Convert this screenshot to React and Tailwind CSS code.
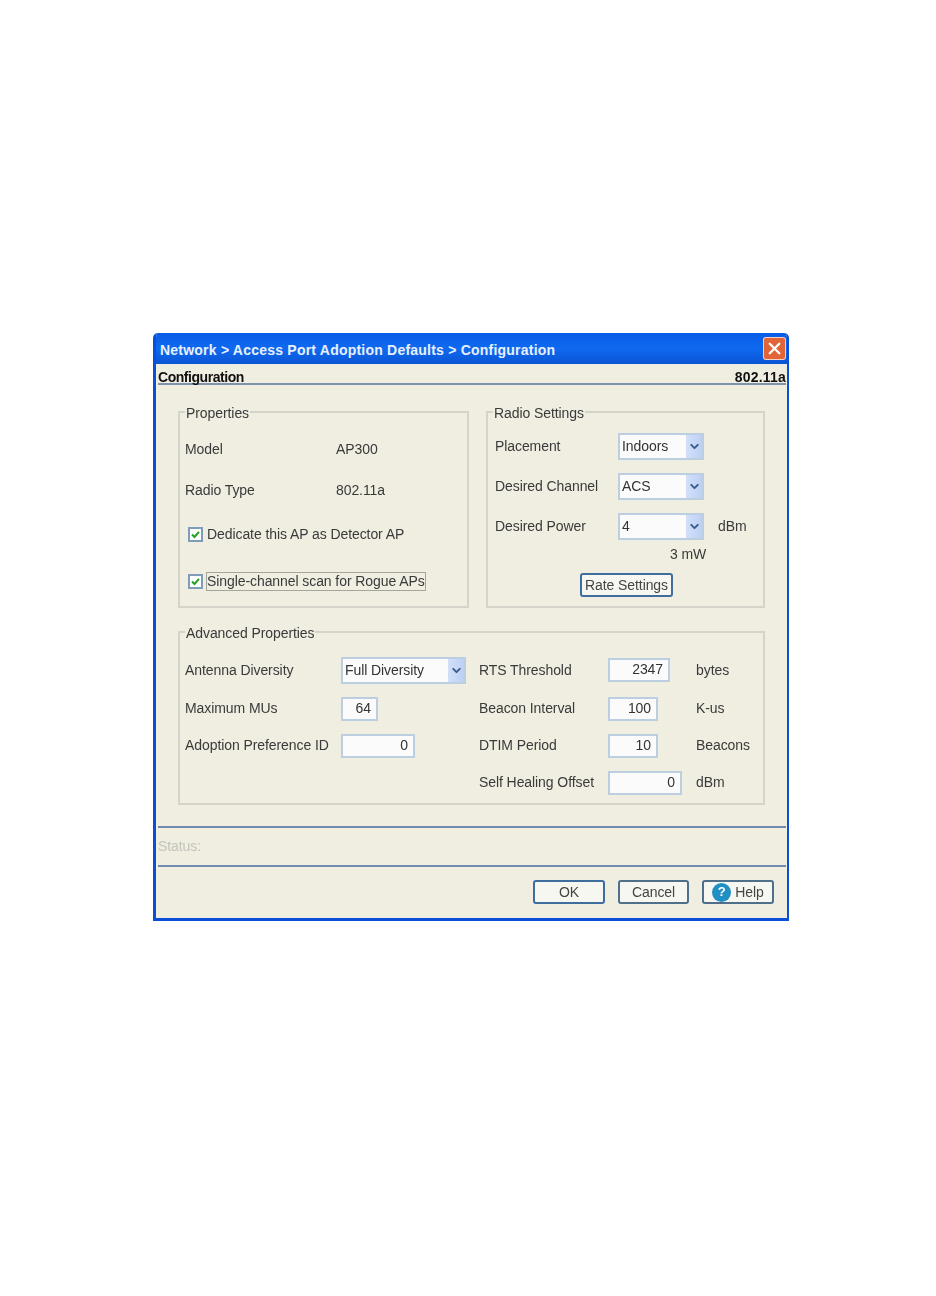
import React from "react";
import { ChevronDown, X } from "lucide-react";

const Field = ({ value, width, align = "text-right" }) => (
  <div
    className={`h-[24px] border-2 border-[#bccfe0] bg-[#fbfbfb] px-[5px] text-[14px] leading-[19px] text-[#333] ${align} ${width}`}
  >
    {value}
  </div>
);

const Select = ({ value, width, height = "h-[27px]" }) => (
  <div className={`flex border-2 border-[#bccfe0] bg-[#fbfbfb] ${width} ${height}`}>
    <span className="flex-1 pl-[2px] text-[14px] leading-[22px] text-[#333]">{value}</span>
    <span className="flex w-[16px] items-center justify-center bg-gradient-to-r from-[#d2e0f8] to-[#bdd0f4]">
      <ChevronDown size={13} strokeWidth={3.5} className="text-[#3d5a8c]" />
    </span>
  </div>
);

const Check = ({ label, focused }) => (
  <div className="flex items-center">
    <div className="ml-[3px] flex h-[15px] w-[15px] items-center justify-center border-2 border-[#7f9db9] bg-white">
      <svg viewBox="0 0 11 11" className="h-[11px] w-[11px]">
        <path d="M2 5.5 L4.5 8 L9 2.8" fill="none" stroke="#21a121" strokeWidth="2" />
      </svg>
    </div>
    <span
      className={`ml-[4px] text-[14px] leading-[17px] text-[#3a3a3a] ${
        focused ? "outline outline-1 outline-[#a5a59c]" : ""
      }`}
    >
      {label}
    </span>
  </div>
);

const Button = ({ children, width, dark }) => (
  <button
    className={`flex h-[24px] items-center justify-center rounded-[3px] border-2 bg-[#f7f7f2] text-[14px] text-[#444] ${width} ${
      dark ? "border-[#3f6d9e]" : "border-[#4f6f8a]"
    }`}
  >
    {children}
  </button>
);

const Group = ({ title, className, children }) => (
  <fieldset className={`min-w-0 border-2 border-[#d4d4ca] ${className}`}>
    <legend className="relative top-[1px] ml-[5px] px-[1px] text-[14px] leading-[14px] text-[#3a3a3a]">{title}</legend>
    {children}
  </fieldset>
);

export default function App() {
  return (
    <div className="min-h-[1296px] bg-white pl-[153px] pt-[333px] font-['Liberation_Sans',Arial,sans-serif] tracking-[-0.08px]">
      <div className="h-[588px] w-[636px] overflow-hidden rounded-t-[5px] border-x-[3px] border-b-[3px] border-[#0b4fd8] border-r-[2px] bg-[#f0eee1] blur-[0.5px]">
        {/* title bar */}
        <div className="-mx-[3px] flex h-[31px] items-center justify-between bg-gradient-to-b from-[#0a5ce6] via-[#0f6af0] to-[#0a54d4] pl-[7px] pr-[4px]">
          <span className="mt-[3px] text-[14px] font-bold tracking-[0.22px] text-[#e8f0ff]">
            Network &gt; Access Port Adoption Defaults &gt; Configuration
          </span>
          <div className="flex h-[23px] w-[23px] items-center justify-center rounded-[3px] border border-white/70 bg-[#e2653a]">
            <X size={19} strokeWidth={3} className="text-white" />
          </div>
        </div>

        {/* header row */}
        <div className="mr-[1px] ml-[2px] flex h-[21px] items-end justify-between border-b-2 border-[#7f93ad] text-[14px] font-bold leading-[12px] text-[#111]">
          <span className="tracking-[-0.45px]">Configuration</span>
          <span className="tracking-[0.2px]">802.11a</span>
        </div>

        <div className="mt-[20px] ml-[22px] flex gap-[17px]">
          <Group title="Properties" className="h-[203px] w-[291px]">
            <div className="flex flex-col pl-[5px] pt-[22px] text-[14px] leading-[17px] text-[#3a3a3a]">
              <div className="flex">
                <span className="w-[151px]">Model</span>
                <span>AP300</span>
              </div>
              <div className="mt-[24px] flex">
                <span className="w-[151px]">Radio Type</span>
                <span>802.11a</span>
              </div>
              <div className="mt-[27px]">
                <Check label="Dedicate this AP as Detector AP" />
              </div>
              <div className="mt-[30px]">
                <Check label="Single-channel scan for Rogue APs" focused />
              </div>
            </div>
          </Group>

          <Group title="Radio Settings" className="h-[203px] w-[279px]">
            <div className="flex flex-col pl-[7px] pt-[14px] text-[14px] leading-[17px] text-[#3a3a3a]">
              <div className="flex items-center">
                <span className="w-[123px]">Placement</span>
                <Select value="Indoors" width="w-[86px]" />
              </div>
              <div className="mt-[13px] flex items-center">
                <span className="w-[123px]">Desired Channel</span>
                <Select value="ACS" width="w-[86px]" />
              </div>
              <div className="mt-[13px] flex items-center">
                <span className="w-[123px]">Desired Power</span>
                <Select value="4" width="w-[86px]" />
                <span className="ml-[14px]">dBm</span>
              </div>
              <div className="mt-[6px] pl-[175px]">3 mW</div>
              <div className="mt-[10px] pl-[85px]">
                <Button width="w-[93px]" dark>Rate Settings</Button>
              </div>
            </div>
          </Group>
        </div>

        <div className="mt-[17px] ml-[22px]">
          <Group title="Advanced Properties" className="h-[180px] w-[587px]">
            <div className="flex pl-[5px] pt-[17px] text-[14px] leading-[17px] text-[#3a3a3a]">
              <div className="flex w-[294px] flex-col">
                <div className="flex h-[28px] items-center">
                  <span className="w-[156px]">Antenna Diversity</span>
                  <Select value="Full Diversity" width="w-[125px]" />
                </div>
                <div className="mt-[11px] flex h-[27px] items-center">
                  <span className="w-[156px]">Maximum MUs</span>
                  <Field value="64" width="w-[37px]" />
                </div>
                <div className="mt-[10px] flex h-[27px] items-center">
                  <span className="w-[156px]">Adoption Preference ID</span>
                  <Field value="0" width="w-[74px]" />
                </div>
              </div>
              <div className="flex flex-col">
                <div className="flex h-[28px] items-center">
                  <span className="w-[129px]">RTS Threshold</span>
                  <span className="w-[88px]"><Field value="2347" width="w-[62px]" /></span>
                  <span>bytes</span>
                </div>
                <div className="mt-[11px] flex h-[27px] items-center">
                  <span className="w-[129px]">Beacon Interval</span>
                  <span className="w-[88px]"><Field value="100" width="w-[50px]" /></span>
                  <span>K-us</span>
                </div>
                <div className="mt-[10px] flex h-[27px] items-center">
                  <span className="w-[129px]">DTIM Period</span>
                  <span className="w-[88px]"><Field value="10" width="w-[50px]" /></span>
                  <span>Beacons</span>
                </div>
                <div className="mt-[10px] flex h-[27px] items-center">
                  <span className="w-[129px]">Self Healing Offset</span>
                  <span className="w-[88px]"><Field value="0" width="w-[74px]" /></span>
                  <span>dBm</span>
                </div>
              </div>
            </div>
          </Group>
        </div>

        <div className="mt-[21px] mr-[1px] ml-[2px] h-[41px] border-y-2 border-[#6f8bb0] pt-[10px] text-[14px] leading-[17px] text-[#c4c4bc]">
          Status:
        </div>

        <div className="mt-[13px] flex justify-end gap-[13px] pr-[13px]">
          <Button width="w-[72px]" dark>OK</Button>
          <Button width="w-[71px]">Cancel</Button>
          <Button width="w-[72px]">
            <span className="mr-[4px] flex h-[19px] w-[19px] items-center justify-center rounded-full bg-[#1f8fc4] text-[13px] font-bold text-white">?</span>
            Help
          </Button>
        </div>
      </div>
    </div>
  );
}
